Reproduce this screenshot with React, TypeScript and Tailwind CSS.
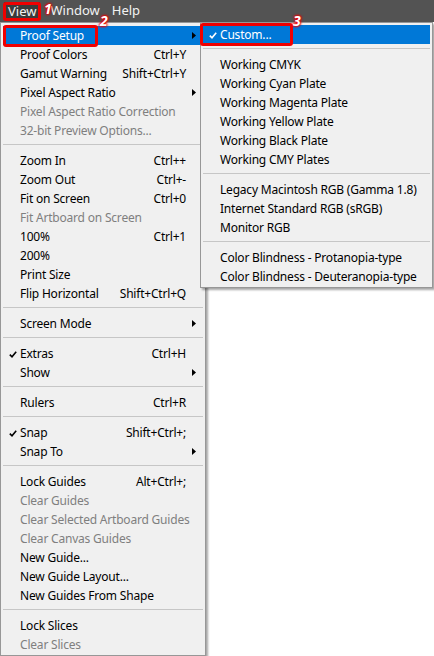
import type { ReactNode } from 'react'

type Item =
  | { sep: true }
  | {
      sep?: false
      label: string
      shortcut?: string
      disabled?: boolean
      checked?: boolean
      submenu?: boolean
      active?: boolean
    }

const viewMenu: Item[] = [
  { label: 'Proof Setup', submenu: true, active: true },
  { label: 'Proof Colors', shortcut: 'Ctrl+Y' },
  { label: 'Gamut Warning', shortcut: 'Shift+Ctrl+Y' },
  { label: 'Pixel Aspect Ratio', submenu: true },
  { label: 'Pixel Aspect Ratio Correction', disabled: true },
  { label: '32-bit Preview Options...', disabled: true },
  { sep: true },
  { label: 'Zoom In', shortcut: 'Ctrl++' },
  { label: 'Zoom Out', shortcut: 'Ctrl+-' },
  { label: 'Fit on Screen', shortcut: 'Ctrl+0' },
  { label: 'Fit Artboard on Screen', disabled: true },
  { label: '100%', shortcut: 'Ctrl+1' },
  { label: '200%' },
  { label: 'Print Size' },
  { label: 'Flip Horizontal', shortcut: 'Shift+Ctrl+Q' },
  { sep: true },
  { label: 'Screen Mode', submenu: true },
  { sep: true },
  { label: 'Extras', shortcut: 'Ctrl+H', checked: true },
  { label: 'Show', submenu: true },
  { sep: true },
  { label: 'Rulers', shortcut: 'Ctrl+R' },
  { sep: true },
  { label: 'Snap', shortcut: 'Shift+Ctrl+;', checked: true },
  { label: 'Snap To', submenu: true },
  { sep: true },
  { label: 'Lock Guides', shortcut: 'Alt+Ctrl+;' },
  { label: 'Clear Guides', disabled: true },
  { label: 'Clear Selected Artboard Guides', disabled: true },
  { label: 'Clear Canvas Guides', disabled: true },
  { label: 'New Guide...' },
  { label: 'New Guide Layout...' },
  { label: 'New Guides From Shape' },
  { sep: true },
  { label: 'Lock Slices' },
  { label: 'Clear Slices', disabled: true },
]

const proofSetup: Item[] = [
  { label: 'Custom...', checked: true, active: true },
  { sep: true },
  { label: 'Working CMYK' },
  { label: 'Working Cyan Plate' },
  { label: 'Working Magenta Plate' },
  { label: 'Working Yellow Plate' },
  { label: 'Working Black Plate' },
  { label: 'Working CMY Plates' },
  { sep: true },
  { label: 'Legacy Macintosh RGB (Gamma 1.8)' },
  { label: 'Internet Standard RGB (sRGB)' },
  { label: 'Monitor RGB' },
  { sep: true },
  { label: 'Color Blindness - Protanopia-type' },
  { label: 'Color Blindness - Deuteranopia-type' },
]

function Check({ color }: { color: string }) {
  return (
    <svg width="8" height="7" viewBox="0 0 8 7" className="absolute left-[6px] top-[7px]">
      <path d="M0.8 3.6 L3 5.8 L7.2 0.8" fill="none" stroke={color} strokeWidth="1.6" />
    </svg>
  )
}

function Arrow() {
  return (
    <svg width="4" height="7" viewBox="0 0 4 7" className="absolute right-[7px] top-[6px]">
      <path d="M0 0 L4 3.5 L0 7 Z" fill="#000" />
    </svg>
  )
}

function MenuRows({ items }: { items: Item[] }) {
  return (
    <>
      {items.map((item, i) => {
        if (item.sep) {
          return (
            <div key={i} className="h-[11px] pt-[4px] px-[2px]">
              <div className="h-px bg-[#c6c6c6]" />
            </div>
          )
        }
        const text = item.active ? 'text-white' : item.disabled ? 'text-[#7f7f7f]' : 'text-black'
        return (
          <div
            key={i}
            className={`relative h-[19px] flex items-center pl-[17px] pr-[17px] mx-[2px] ${
              item.active ? 'bg-[#0078d7]' : ''
            } ${text}`}
          >
            {item.checked && <Check color={item.active ? '#fff' : '#000'} />}
            <span className="flex-1 whitespace-nowrap">{item.label}</span>
            {item.shortcut && <span className="whitespace-nowrap">{item.shortcut}</span>}
            {item.submenu && <Arrow />}
          </div>
        )
      })}
    </>
  )
}

// hand-drawn red markers over the menus
function Marker({ className, children }: { className: string; children?: ReactNode }) {
  return (
    <div className={`absolute border-[3px] border-[#f00000] rounded-[3px] pointer-events-none ${className}`}>
      {children}
    </div>
  )
}

function Step({ n, className }: { n: string; className: string }) {
  return (
    <span
      className={`absolute text-[14px] font-bold italic leading-none text-white [text-shadow:0_0_2px_#f00000,0_0_2px_#f00000,0_0_3px_#f00000,0_0_3px_#f00000] ${className}`}
    >
      {n}
    </span>
  )
}

export default function App() {
  return (
    <div className="relative w-[434px] h-[656px] overflow-hidden bg-white text-[12px] tracking-[-0.2px] font-['Noto_Sans',sans-serif]">
      {/* menu bar */}
      <div className="h-[22px] bg-[#535353] flex items-center text-[#f2f2f2] text-[13px] tracking-normal">
        <span className="ml-[4px] px-[4px] h-[18px] leading-[18px] bg-[#3b3b3b]">View</span>
        <span className="ml-[10px]">Window</span>
        <span className="ml-[12px]">Help</span>
      </div>

      {/* View menu */}
      <div className="w-[206px] h-[634px] bg-[#f0f0f0] border border-[#979797] pt-[3px] shadow-[2px_2px_2px_rgba(0,0,0,0.35)]">
        <MenuRows items={viewMenu} />
      </div>

      {/* Proof Setup submenu */}
      <div className="absolute left-[200px] top-[22px] w-[233px] bg-[#f0f0f0] border border-[#979797] pt-[2px] pb-[1px] shadow-[2px_2px_2px_rgba(0,0,0,0.35)]">
        <MenuRows items={proofSetup} />
      </div>

      <Marker className="left-[3px] top-[2px] w-[38px] h-[19px]" />
      <Step n="1" className="left-[44px] top-[2px]" />
      <Marker className="left-[3px] top-[25px] w-[95px] h-[22px]" />
      <Step n="2" className="left-[100px] top-[14px]" />
      <Marker className="left-[200px] top-[23px] w-[93px] h-[23px]" />
      <Step n="3" className="left-[293px] top-[14px]" />
    </div>
  )
}
